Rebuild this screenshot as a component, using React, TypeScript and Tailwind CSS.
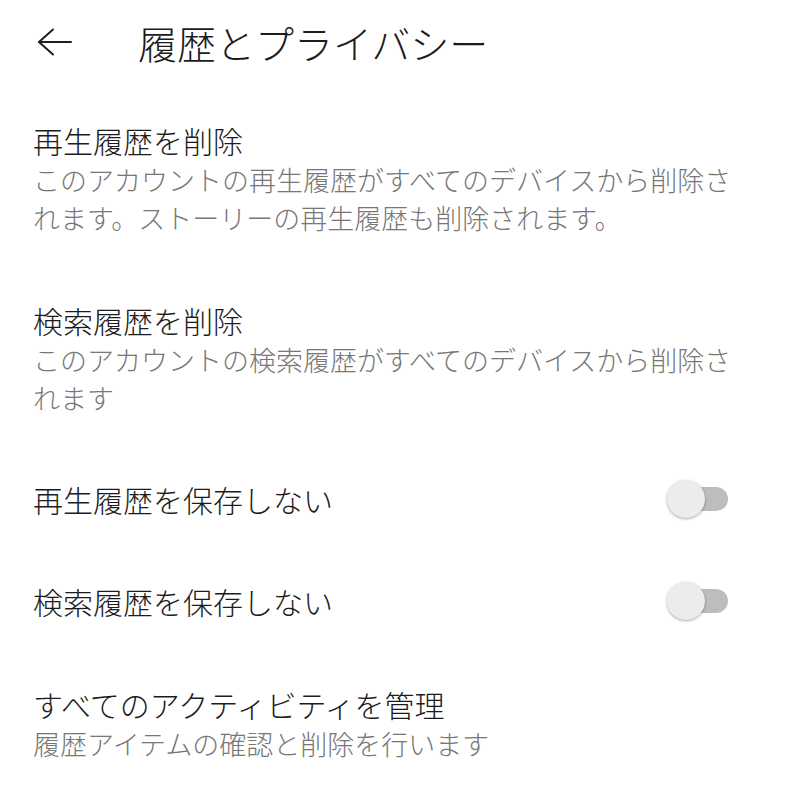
import { useState } from 'react'

const font = { fontFamily: '"Noto Sans CJK JP", "Noto Sans", sans-serif' }

function Toggle({ on, onChange }: { on: boolean; onChange: () => void }) {
  return (
    <button onClick={onChange} className="relative w-[62px] h-[40px] shrink-0">
      <span
        className={`absolute right-[1px] top-[8px] w-[52px] h-[24px] rounded-full ${
          on ? 'bg-[#f3a9a9]' : 'bg-[#bdbdbd]'
        }`}
      />
      <span
        className={`absolute top-[1px] w-[38px] h-[38px] rounded-full shadow-[0_1px_3px_rgba(0,0,0,0.35)] ${
          on ? 'left-[24px] bg-[#e53935]' : 'left-0 bg-[#ececec]'
        }`}
      />
    </button>
  )
}

export default function App() {
  const [saveWatch, setSaveWatch] = useState(false)
  const [saveSearch, setSaveSearch] = useState(false)

  return (
    <div className="w-[789px] h-[800px] bg-white overflow-hidden font-light" style={font}>
      <div className="h-[84px] flex items-center">
        <button className="ml-[37px] w-[36px] h-[28px] flex items-center">
          <svg width="36" height="28" viewBox="0 0 36 28" fill="none" stroke="#1f1f1f" strokeWidth="2" strokeLinecap="round" strokeLinejoin="round">
            <path d="M2 14H34" />
            <path d="M16 1.5L2 14L16 26.5" />
          </svg>
        </button>
        <h1 className="ml-[65px] text-[39px] leading-[44px] text-[#1c1c1c]">履歴とプライバシー</h1>
      </div>

      <div className="pt-[4px] pl-[33px] pr-[50px]">
        <div className="py-[31px]">
          <div className="text-[30px] leading-[42px] text-[#1c1c1c]">再生履歴を削除</div>
          <div className="text-[27px] leading-[38px] text-[#777777]">
            このアカウントの再生履歴がすべてのデバイスから削除されます。ストーリーの再生履歴も削除されます。
          </div>
        </div>

        <div className="py-[31px]">
          <div className="text-[30px] leading-[42px] text-[#1c1c1c]">検索履歴を削除</div>
          <div className="text-[27px] leading-[38px] text-[#777777]">
            このアカウントの検索履歴がすべてのデバイスから削除されます
          </div>
        </div>

        <div className="py-[30px] flex items-center justify-between pr-[10px]">
          <div className="text-[30px] leading-[42px] text-[#1c1c1c]">再生履歴を保存しない</div>
          <Toggle on={saveWatch} onChange={() => setSaveWatch(!saveWatch)} />
        </div>

        <div className="py-[30px] flex items-center justify-between pr-[10px]">
          <div className="text-[30px] leading-[42px] text-[#1c1c1c]">検索履歴を保存しない</div>
          <Toggle on={saveSearch} onChange={() => setSaveSearch(!saveSearch)} />
        </div>

        <div className="py-[31px]">
          <div className="text-[30px] leading-[42px] text-[#1c1c1c]">すべてのアクティビティを管理</div>
          <div className="text-[27px] leading-[38px] text-[#777777]">履歴アイテムの確認と削除を行います</div>
        </div>
      </div>
    </div>
  )
}
